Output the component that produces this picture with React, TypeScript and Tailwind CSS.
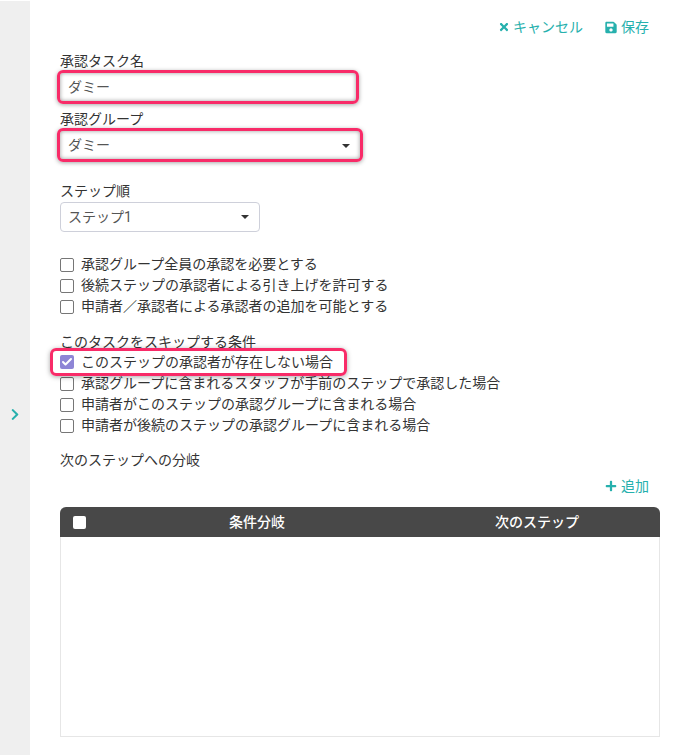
import { Check } from 'lucide-react';
import { FaChevronRight, FaPlus, FaSave, FaTimes } from 'react-icons/fa';

const font = "font-['Roboto','Noto_Sans_CJK_JP',sans-serif]";

function Caret() {
  return <span className="w-0 h-0 border-x-[4px] border-x-transparent border-t-[4px] border-t-[#333]" />;
}

function CheckRow({ label }: { label: string }) {
  return (
    <div className="flex items-center h-[21px]">
      <span className="w-[14px] h-[14px] border border-[#767676] rounded-[2px] bg-white shrink-0" />
      <span className="ml-[7px] text-[14px] text-[#333]">{label}</span>
    </div>
  );
}

export default function App() {
  return (
    <div className={`${font} flex w-[686px] h-[755px] bg-white overflow-hidden`}>
      <div className="w-[30px] mt-px bg-[#efefef] flex items-center justify-center">
        <FaChevronRight className="w-[10px] h-[13px] text-[#26b0ad] mt-[72px]" />
      </div>

      <div className="w-[600px] ml-[30px] flex flex-col">
        <div className="flex justify-end items-center h-[20px] mt-[17px] gap-[22px] pr-[11px] text-[14px] text-[#26b0ad]">
          <span className="flex items-center gap-[4px]">
            <FaTimes className="w-[10px] h-[12px]" />
            キャンセル
          </span>
          <span className="flex items-center gap-[4px]">
            <FaSave className="w-[12px] h-[13px]" />
            保存
          </span>
        </div>

        <div className="mt-[15px] text-[14px] leading-[18px] text-[#333]">承認タスク名</div>
        <div className="-ml-[3px] w-[302px] h-[34px] border-[3px] border-[#f82b68] rounded-[6px] shadow-[0_1px_4px_rgba(0,0,0,0.35),inset_0_0_4px_rgba(0,0,0,0.4)] flex items-center pl-[8px] pt-px text-[14px] text-[#555]">
          ダミー
        </div>

        <div className="mt-[6px] text-[14px] leading-[18px] text-[#333]">承認グループ</div>
        <div className="-ml-[3px] w-[306px] h-[34px] border-[3px] border-[#f82b68] rounded-[6px] shadow-[0_1px_4px_rgba(0,0,0,0.35),inset_0_0_4px_rgba(0,0,0,0.4)] flex items-center justify-between pl-[8px] pr-[10px] pt-px text-[14px] text-[#555]">
          ダミー
          <Caret />
        </div>

        <div className="mt-[20px] text-[14px] leading-[18px] text-[#333]">ステップ順</div>
        <div className="mt-[2px] w-[200px] h-[30px] border border-[#ced0da] rounded-[4px] flex items-center justify-between pl-[7px] pr-[10px] text-[14px] text-[#555]">
          ステップ1
          <Caret />
        </div>

        <div className="mt-[22px] flex flex-col">
          <CheckRow label="承認グループ全員の承認を必要とする" />
          <CheckRow label="後続ステップの承認者による引き上げを許可する" />
          <CheckRow label="申請者／承認者による承認者の追加を可能とする" />
        </div>

        <div className="mt-[16px] text-[14px] leading-[18px] text-[#333]">このタスクをスキップする条件</div>
        <div className="-ml-[10px] w-[297px] h-[28px] border-[3px] border-[#f82b68] rounded-[6px] shadow-[0_1px_5px_rgba(0,0,0,0.35)] flex items-center pl-[7px] -mt-[3px] -mb-[3px] relative">
          <span className="w-[14px] h-[14px] rounded-[2px] bg-[#8e85d6] flex items-center justify-center shrink-0">
            <Check className="w-3 h-3 text-white" strokeWidth={4} />
          </span>
          <span className="ml-[7px] text-[14px] text-[#333]">このステップの承認者が存在しない場合</span>
        </div>
        <div className="flex flex-col">
          <CheckRow label="承認グループに含まれるスタッフが手前のステップで承認した場合" />
          <CheckRow label="申請者がこのステップの承認グループに含まれる場合" />
          <CheckRow label="申請者が後続のステップの承認グループに含まれる場合" />
        </div>

        <div className="mt-[15px] text-[14px] leading-[18px] text-[#333]">次のステップへの分岐</div>

        <div className="flex justify-end items-center h-[20px] mt-[7px] pr-[11px] text-[14px] text-[#26b0ad]">
          <span className="flex items-center gap-[4px]">
            <FaPlus className="w-[12px] h-[12px]" />
            追加
          </span>
        </div>

        <div className="mt-[11px] w-[600px] h-[230px] border border-[#e6e6e6] border-t-0 rounded-t-[6px]">
          <div className="-mx-px h-[30px] bg-[#484848] rounded-t-[6px] flex items-center text-[14px] font-medium text-white">
            <span className="ml-[13px] w-[13px] h-[13px] rounded-[2px] bg-white" />
            <span className="w-[110px] ml-[116px] text-center">条件分岐</span>
            <span className="w-[110px] ml-[170px] text-center">次のステップ</span>
          </div>
        </div>
      </div>
    </div>
  );
}
